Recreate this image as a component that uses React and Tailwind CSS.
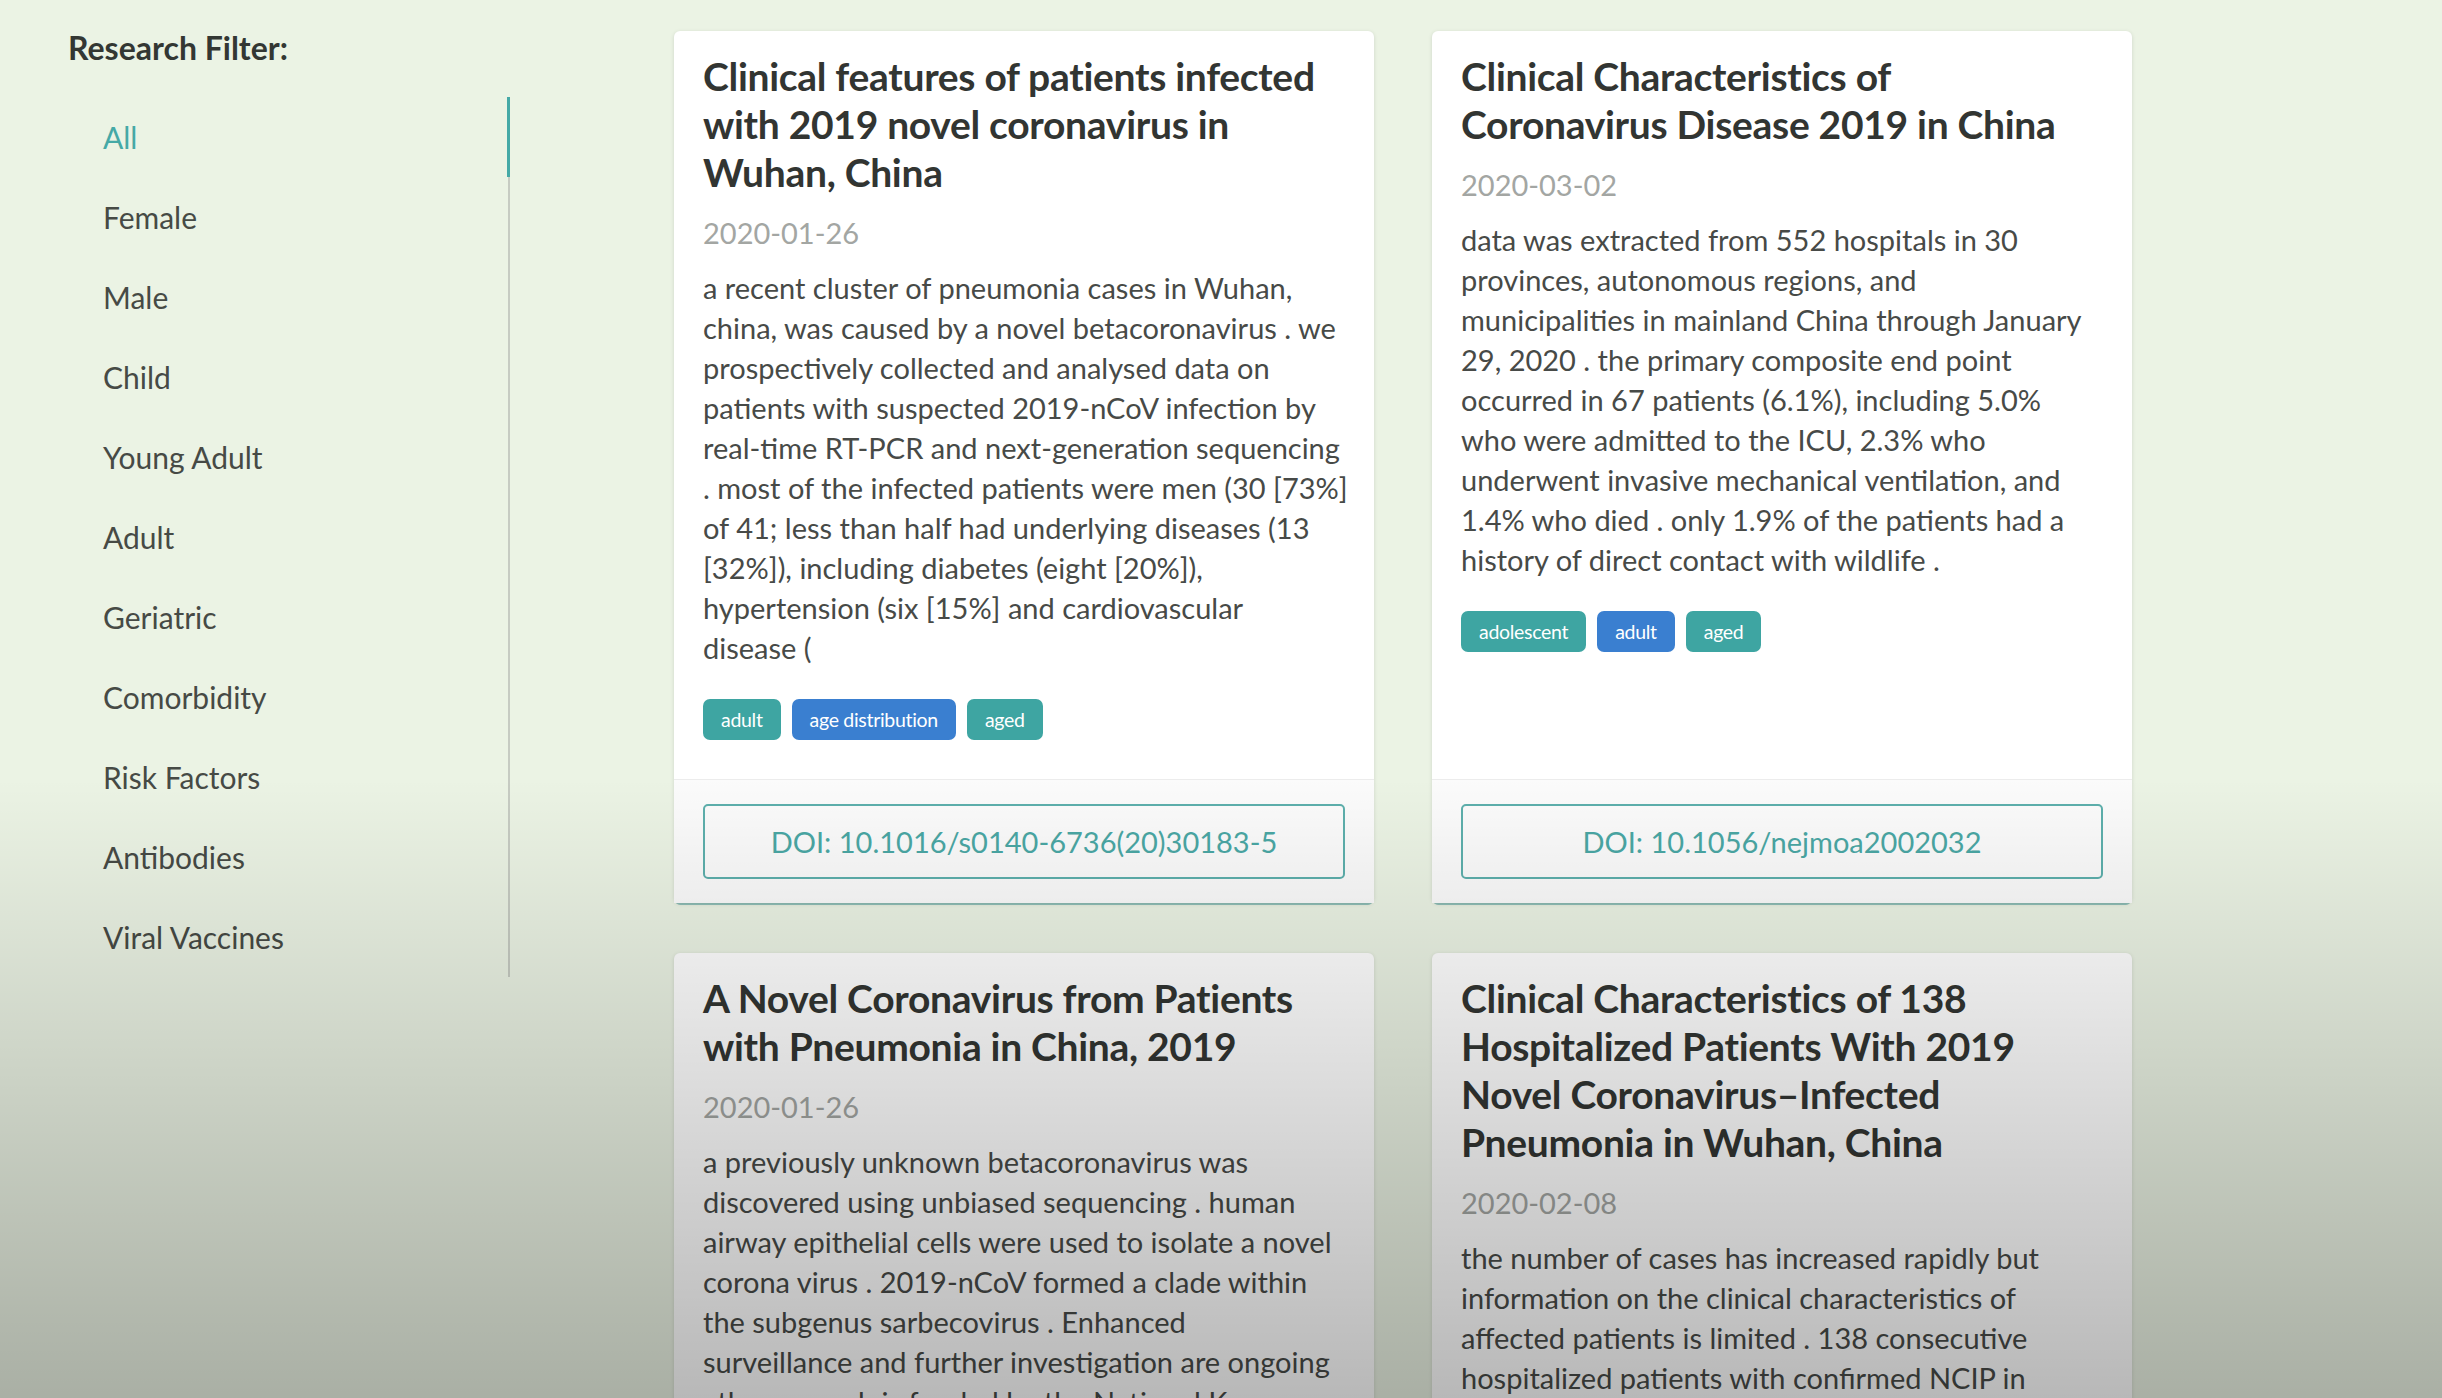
import React, {useState} from 'react';

const filters = [
    'All',
    'Female',
    'Male',
    'Child',
    'Young Adult',
    'Adult',
    'Geriatric',
    'Comorbidity',
    'Risk Factors',
    'Antibodies',
    'Viral Vaccines',
];

// abstracts are kept as the lines they are shown in
const papers = [
    {
        title: 'Clinical features of patients infected with 2019 novel coronavirus in Wuhan, China',
        date: '2020-01-26',
        abstract: [
            'a recent cluster of pneumonia cases in Wuhan,',
            'china, was caused by a novel betacoronavirus . we',
            'prospectively collected and analysed data on',
            'patients with suspected 2019-nCoV infection by',
            'real-time RT-PCR and next-generation sequencing',
            '. most of the infected patients were men (30 [73%]',
            'of 41; less than half had underlying diseases (13',
            '[32%]), including diabetes (eight [20%]),',
            'hypertension (six [15%] and cardiovascular',
            'disease (',
        ],
        tags: [
            {label: 'adult', tone: 'teal'},
            {label: 'age distribution', tone: 'blue'},
            {label: 'aged', tone: 'teal'},
        ],
        doi: '10.1016/s0140-6736(20)30183-5',
    },
    {
        title: 'Clinical Characteristics of Coronavirus Disease 2019 in China',
        date: '2020-03-02',
        abstract: [
            'data was extracted from 552 hospitals in 30',
            'provinces, autonomous regions, and',
            'municipalities in mainland China through January',
            '29, 2020 . the primary composite end point',
            'occurred in 67 patients (6.1%), including 5.0%',
            'who were admitted to the ICU, 2.3% who',
            'underwent invasive mechanical ventilation, and',
            '1.4% who died . only 1.9% of the patients had a',
            'history of direct contact with wildlife .',
        ],
        tags: [
            {label: 'adolescent', tone: 'teal'},
            {label: 'adult', tone: 'blue'},
            {label: 'aged', tone: 'teal'},
        ],
        doi: '10.1056/nejmoa2002032',
    },
    {
        title: 'A Novel Coronavirus from Patients with Pneumonia in China, 2019',
        date: '2020-01-26',
        abstract: [
            'a previously unknown betacoronavirus was',
            'discovered using unbiased sequencing . human',
            'airway epithelial cells were used to isolate a novel',
            'corona virus . 2019-nCoV formed a clade within',
            'the subgenus sarbecovirus . Enhanced',
            'surveillance and further investigation are ongoing',
            '. the research is funded by the National Key',
            'Research and Development Program of China and',
            'the National Major Project for Control and',
            'Prevention of Infectious Disease in China .',
        ],
        tags: [
            {label: 'adult', tone: 'teal'},
            {label: 'aged', tone: 'blue'},
        ],
        doi: '10.1056/nejmoa2001017',
    },
    {
        title: 'Clinical Characteristics of 138 Hospitalized Patients With 2019 Novel Coronavirus–Infected Pneumonia in Wuhan, China',
        date: '2020-02-08',
        abstract: [
            'the number of cases has increased rapidly but',
            'information on the clinical characteristics of',
            'affected patients is limited . 138 consecutive',
            'hospitalized patients with confirmed NCIP in',
            'Zhongnan Hospital of Wuhan University in Wuhan,',
            'China, from January 1 to January 28, 2020 were',
            'enrolled .',
        ],
        tags: [
            {label: 'adult', tone: 'teal'},
            {label: 'aged', tone: 'blue'},
        ],
        doi: '10.1001/jama.2020.1585',
    },
];

const tagTone = {
    teal: 'bg-[#3ea5a2]',
    blue: 'bg-[#3a7fd0]',
};

const PaperCard = ({paper}) => (
    <div
        className="flex flex-col rounded-[6px] bg-white shadow-[0_1px_4px_rgba(10,10,10,0.12),0_3px_0_-1px_rgba(80,160,158,0.55)]">
        <div className="flex-1 px-[29px] pt-[21px] pb-[39px]">
            <h2 className="text-[39px] leading-[48px] font-bold tracking-[-0.3px] text-[#323532]">
                {paper.title}
            </h2>
            <p className="mt-[17px] text-[29px] leading-[40px] text-[#a3a6a3]">{paper.date}</p>
            <p className="mt-[15px] text-[29px] leading-[40px] text-[#474a47]">
                {paper.abstract.map((line, i) => (
                    <span key={i} className="block whitespace-nowrap">{line}</span>
                ))}
            </p>
            <div className="mt-[31px] flex gap-[11px]">
                {paper.tags.map((tag) => (
                    <span
                        key={tag.label}
                        className={`flex h-[41px] items-center rounded-[7px] px-[18px] text-[19.5px] tracking-[-0.3px] text-white ${tagTone[tag.tone]}`}
                    >
                        {tag.label}
                    </span>
                ))}
            </div>
        </div>
        <div className="border-t border-[#ececec] bg-[#fbfbfb] px-[29px] py-[24px]">
            <a
                href="#"
                className="flex h-[75px] items-center justify-center rounded-[5px] border-2 border-[#5dafac] text-[29px] text-[#4aa7a4]"
            >
                DOI: {paper.doi}
            </a>
        </div>
    </div>
);

const App = () => {
    const [active, setActive] = useState('All');

    return (
        <div className="relative h-[1398px] w-full overflow-hidden bg-[#ebf3e4] font-['Lato','Noto_Sans',sans-serif]">
            <div className="flex">
                {/* Sidebar */}
                <aside className="w-[510px] shrink-0 pl-[68px] pt-[30px]">
                    <h3 className="text-[32px] leading-[36px] font-bold text-[#333733]">Research Filter:</h3>
                    <ul className="mt-[31px] border-r-2 border-[#c6cbc2]">
                        {filters.map((f) => (
                            <li
                                key={f}
                                onClick={() => setActive(f)}
                                className={`flex h-[80px] cursor-pointer items-center pl-[35px] text-[30px] ${
                                    active === f
                                        ? '-mr-[2px] border-r-[3px] border-[#45a9a6] text-[#45a9a6]'
                                        : 'text-[#464a45]'
                                }`}
                            >
                                {f}
                            </li>
                        ))}
                    </ul>
                </aside>

                {/* Results */}
                <main className="ml-[164px] pt-[31px]">
                    <div className="grid grid-cols-[700px_700px] gap-x-[58px] gap-y-[50px]">
                        {papers.map((p) => (
                            <PaperCard key={p.doi} paper={p}/>
                        ))}
                    </div>
                </main>
            </div>

            {/* video player shade at the bottom */}
            <div
                className="pointer-events-none absolute inset-x-0 bottom-0 h-[620px] bg-gradient-to-b from-transparent to-[rgba(0,0,0,0.28)]"/>
        </div>
    );
};

export default App;
